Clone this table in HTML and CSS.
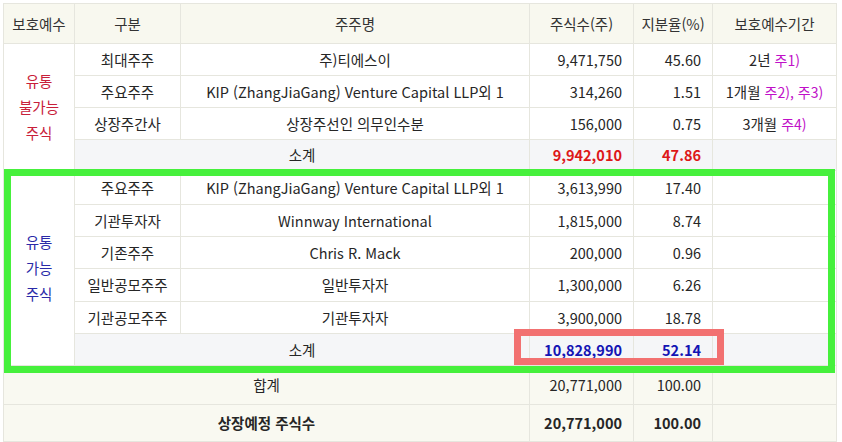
FILE: index.html
```html
<!DOCTYPE html>
<html lang="ko">
<head>
<meta charset="utf-8">
<link rel="stylesheet" href="styles.css">
</head>
<body>
<div class="wrap">
<table class="tbl">
<colgroup>
<col class="c1"><col class="c2"><col class="c3"><col class="c4"><col class="c5"><col class="c6">
</colgroup>
<thead>
<tr class="h-head">
<th>보호예수</th><th>구분</th><th>주주명</th><th>주식수(주)</th><th>지분율(%)</th><th>보호예수기간</th>
</tr>
</thead>
<tbody>
<tr class="r32">
<td rowspan="4" class="grp red">유통<br>불가능<br>주식</td>
<td class="ctr">최대주주</td><td class="ctr">주)티에스이</td><td class="num">9,471,750</td><td class="num">45.60</td><td class="ctr">2년 <span class="note">주1)</span></td>
</tr>
<tr class="r32">
<td class="ctr">주요주주</td><td class="ctr">KIP (ZhangJiaGang) Venture Capital LLP외 1</td><td class="num">314,260</td><td class="num">1.51</td><td class="ctr">1개월 <span class="note">주2), 주3)</span></td>
</tr>
<tr class="r32">
<td class="ctr">상장주간사</td><td class="ctr">상장주선인 의무인수분</td><td class="num">156,000</td><td class="num">0.75</td><td class="ctr">3개월 <span class="note">주4)</span></td>
</tr>
<tr class="r31 sub">
<td colspan="2" class="ctr">소계</td><td class="num bold redv">9,942,010</td><td class="num bold redv">47.86</td><td></td>
</tr>
<tr class="r34">
<td rowspan="6" class="grp blue">유통<br>가능<br>주식</td>
<td class="ctr">주요주주</td><td class="ctr">KIP (ZhangJiaGang) Venture Capital LLP외 1</td><td class="num">3,613,990</td><td class="num">17.40</td><td></td>
</tr>
<tr class="r32">
<td class="ctr">기관투자자</td><td class="ctr">Winnway International</td><td class="num">1,815,000</td><td class="num">8.74</td><td></td>
</tr>
<tr class="r32">
<td class="ctr">기존주주</td><td class="ctr">Chris R. Mack</td><td class="num">200,000</td><td class="num">0.96</td><td></td>
</tr>
<tr class="r33">
<td class="ctr">일반공모주주</td><td class="ctr">일반투자자</td><td class="num">1,300,000</td><td class="num">6.26</td><td></td>
</tr>
<tr class="r32">
<td class="ctr">기관공모주주</td><td class="ctr">기관투자자</td><td class="num">3,900,000</td><td class="num">18.78</td><td></td>
</tr>
<tr class="r32 sub">
<td colspan="2" class="ctr">소계</td><td class="num bold bluev">10,828,990</td><td class="num bold bluev">52.14</td><td></td>
</tr>
<tr class="r39 tot">
<td colspan="3" class="ctr">합계</td><td class="num">20,771,000</td><td class="num">100.00</td><td></td>
</tr>
<tr class="r37 tot">
<td colspan="3" class="ctr bold">상장예정 주식수</td><td class="num bold">20,771,000</td><td class="num bold">100.00</td><td></td>
</tr>
</tbody>
</table>
<div class="hl-green"></div>
<div class="hl-red"></div>
</div>
</body>
</html>
```

FILE: styles.css
```css
html, body {
  margin: 0;
  padding: 0;
  background: #ffffff;
}
body {
  font-family: "Noto Sans CJK KR", "Noto Sans", sans-serif;
  font-size: 14.5px;
  color: #262626;
}
.wrap {
  position: relative;
  padding: 3px 0 0 3px;
  width: 833px;
}
.tbl {
  border-collapse: collapse;
  table-layout: fixed;
  width: 833px;
}
.c1 { width: 71px; }
.c2 { width: 106px; }
.c3 { width: 349px; }
.c4 { width: 104px; }
.c5 { width: 79px; }
.c6 { width: 124px; }
.tbl th, .tbl td {
  border: 1px solid #e6e6de;
  padding: 0 11px;
  line-height: 20px;
  white-space: nowrap;
  overflow: visible;
}
.tbl th {
  background: #f8f8ef;
  font-weight: normal;
  color: #333;
  padding: 0;
}
.h-head { height: 40px; }
.r31 { height: 31px; }
.r32 { height: 32px; }
.r33 { height: 33px; }
.r34 { height: 34px; }
.r37 { height: 37px; }
.r39 { height: 39px; }
.ctr { text-align: center; }
.num { text-align: right; }
.bold { font-weight: bold; }
.grp {
  text-align: center;
  line-height: 26px !important;
  padding: 0 !important;
  background: #fff;
}
.red { color: #c8203a; }
.blue { color: #2a2aa8; }
.redv { color: #dd1818; }
.bluev { color: #1414b4; }
.note { color: #c010c8; font-size: 14px; }
.sub td { background: #f5f6f8; }
.tot td { background: #f9f9f1; }
.hl-green {
  position: absolute;
  left: 4px;
  top: 169px;
  width: 817px;
  height: 190px;
  border: 7px solid #46f03c;
}
.hl-red {
  position: absolute;
  left: 514px;
  top: 329px;
  width: 196px;
  height: 22px;
  border: 7px solid #f27171;
}
```
